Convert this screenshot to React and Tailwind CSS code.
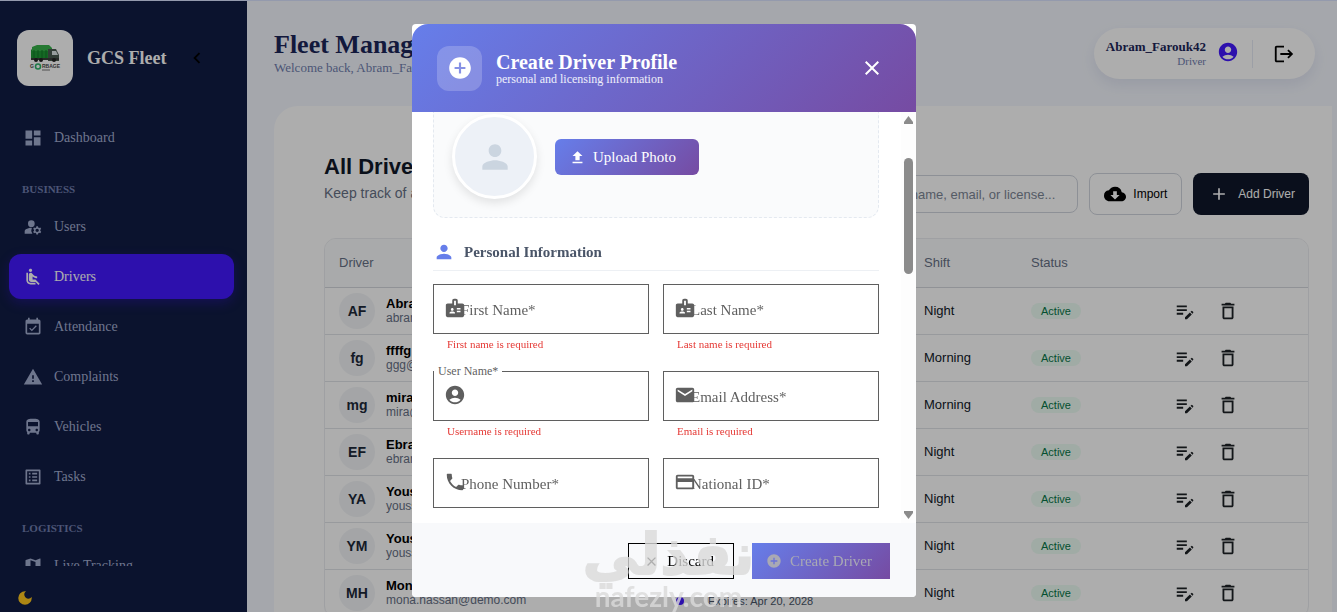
import {
  MdAccountCircle,
  MdAdd,
  MdAddCircle,
  MdAirlineSeatReclineNormal,
  MdBadge,
  MdChevronLeft,
  MdClose,
  MdCloudDownload,
  MdCreditCard,
  MdDarkMode,
  MdDashboard,
  MdDeleteOutline,
  MdDirectionsBus,
  MdEditNote,
  MdEmail,
  MdEventAvailable,
  MdListAlt,
  MdLogout,
  MdManageAccounts,
  MdMap,
  MdPerson,
  MdPhone,
  MdUpload,
  MdWarning,
} from "react-icons/md";

const drivers = [
  { initials: "AF", name: "Abram Farouk", email: "abram@demo.com", shift: "Night" },
  { initials: "fg", name: "ffffg", email: "ggg@demo.com", shift: "Morning" },
  { initials: "mg", name: "mira", email: "mira@demo.com", shift: "Morning" },
  { initials: "EF", name: "Ebram", email: "ebram@demo.com", shift: "Night" },
  { initials: "YA", name: "Youssef", email: "youssef@demo.com", shift: "Night" },
  { initials: "YM", name: "Youssef", email: "youssef@demo.com", shift: "Night" },
  {
    initials: "MH",
    name: "Mona Hassan",
    email: "mona.hassan@demo.com",
    shift: "Night",
    expires: "Apr 20, 2028",
  },
];

const fields = [
  { id: "firstName", label: "First Name", icon: MdBadge, error: "First name is required" },
  { id: "lastName", label: "Last Name", icon: MdBadge, error: "Last name is required" },
  {
    id: "userName",
    label: "User Name",
    icon: MdAccountCircle,
    error: "Username is required",
    floating: true,
  },
  { id: "email", label: "Email Address", icon: MdEmail, error: "Email is required" },
  { id: "phone", label: "Phone Number", icon: MdPhone },
  { id: "nationalId", label: "National ID", icon: MdCreditCard },
];

const Logo = () => (
  <svg viewBox="0 0 56 56" className="h-14 w-14" aria-label="Garbage company logo">
    <path d="M14 20l3-3h15l3 3v9H14z" fill="#1f9a35" />
    <path d="M15 17l5-2h12l3 3v3H15z" fill="#37b34a" />
    <path d="M17 20v8M21 20v8M25 20v8M29 20v8" stroke="#157a28" strokeWidth="1" />
    <path d="M31 19h8l3 6v6H31z" fill="#4b5a50" />
    <path d="M35 21h4l2 4h-6z" fill="#dfe8e8" />
    <path d="M14 28h28v2H14z" fill="#3a3f3a" />
    <circle cx="19" cy="30" r="2" fill="#222" />
    <circle cx="24" cy="30" r="2" fill="#222" />
    <circle cx="37" cy="30" r="2" fill="#222" />
    <circle cx="21" cy="36.500" r="2.500" fill="none" stroke="#2db36a" strokeWidth="1.500" />
    <text x="13" y="38" fontSize="5" fontWeight="700" fontFamily="Liberation Sans, sans-serif" fill="#4b4b4b">
      G
    </text>
    <text x="25" y="38" fontSize="5" fontWeight="700" fontFamily="Liberation Sans, sans-serif" fill="#4b4b4b">
      RBAGE
    </text>
    <path d="M25 40h8" stroke="#777" strokeWidth="1" />
  </svg>
);

const NavItem = ({ icon: Icon, label, active }) => (
  <a
    href="#"
    className={
      active
        ? "flex h-[45px] shrink-0 items-center gap-[11px] rounded-xl bg-[#4318ff] px-[14px] text-white shadow-[0_4px_12px_rgba(67,24,255,0.3)]"
        : "flex h-[45px] shrink-0 items-center gap-[11px] rounded-xl px-[14px] text-[#a3aed0]"
    }
  >
    <Icon size={20} />
    <span className="text-sm">{label}</span>
  </a>
);

const NavSection = ({ children }) => (
  <h2 className="-mt-[5px] flex h-[39px] shrink-0 items-end px-[13px] pb-1 text-[11px] leading-3 font-bold text-[#707eae]">
    {children}
  </h2>
);

const Sidebar = () => (
  <aside className="flex w-[247px] shrink-0 flex-col bg-[#111c44]">
    <div className="flex items-center px-[17px] pt-[29px]">
      <div className="rounded-xl bg-white">
        <Logo />
      </div>
      <span className="ml-[14px] text-lg font-bold text-white">GCS Fleet</span>
      <button type="button" aria-label="Collapse sidebar" className="ml-5 text-black">
        <MdChevronLeft size={22} />
      </button>
    </div>
    <nav className="mt-[29px] flex min-h-0 flex-1 flex-col gap-[5px] overflow-hidden pr-[13px] pl-[9px]">
      <NavItem icon={MdDashboard} label="Dashboard" />
      <NavSection>BUSINESS</NavSection>
      <NavItem icon={MdManageAccounts} label="Users" />
      <NavItem icon={MdAirlineSeatReclineNormal} label="Drivers" active />
      <NavItem icon={MdEventAvailable} label="Attendance" />
      <NavItem icon={MdWarning} label="Complaints" />
      <NavItem icon={MdDirectionsBus} label="Vehicles" />
      <NavItem icon={MdListAlt} label="Tasks" />
      <NavSection>LOGISTICS</NavSection>
      <NavItem icon={MdMap} label="Live Tracking" />
    </nav>
    <div className="flex h-[46px] shrink-0 items-end px-4 pb-[5px]">
      <button type="button" aria-label="Toggle dark mode" className="text-[#ffc81e]">
        <MdDarkMode size={18} />
      </button>
    </div>
  </aside>
);

const TopBar = () => (
  <header className="flex items-start justify-between pt-[27px] pr-[17px]">
    <div>
      <h1 className="pt-[2px] text-[26px] leading-[30px] font-bold text-[#1b2559]">
        Fleet Management
      </h1>
      <p className="text-[13px] leading-4 text-[#707eae]">Welcome back, Abram_Farouk42</p>
    </div>
    <div className="flex h-[51px] items-center rounded-full bg-white pr-5 pl-3 shadow-[0_6px_14px_rgba(112,126,174,0.15)]">
      <div className="pb-[2px] text-right">
        <p className="text-[13px] leading-4 font-bold text-[#1b2559]">Abram_Farouk42</p>
        <p className="text-[11px] leading-3 text-[#707eae]">Driver</p>
      </div>
      <MdAccountCircle size={22} className="mr-[13px] mb-1 ml-[11px] text-[#4318ff]" />
      <div className="h-7 border-l border-[#e6eaf5]" />
      <button type="button" aria-label="Log out" className="ml-5 text-black">
        <MdLogout size={22} />
      </button>
    </div>
  </header>
);

const DriversTable = () => (
  <div className="mt-[23px] overflow-hidden rounded-xl border border-[#eaecf0]">
    <table className="w-full table-fixed text-left text-[13px]">
      <thead className="bg-[#fafbfc] text-[#667085]">
        <tr className="h-12 border-b border-[#d5d8dd]">
          <th className="pl-[14px] font-normal">Driver</th>
          <th className="w-[245px]" />
          <th className="w-[107px] pl-[14px] font-normal">Shift</th>
          <th className="w-[145px] pl-[14px] font-normal">Status</th>
          <th className="w-[146px]" />
        </tr>
      </thead>
      <tbody>
        {drivers.map((driver) => (
          <tr key={driver.initials} className="h-[47px] border-b border-[#e1e4e8]">
            <td className="pl-[14px]">
              <div className="flex items-center gap-[11px]">
                <div className="flex h-9 w-9 items-center justify-center rounded-full bg-[#f2f4f7] text-sm font-bold text-[#1d2939]">
                  {driver.initials}
                </div>
                <div>
                  <p className="text-[13px] leading-[15px] font-bold text-black">{driver.name}</p>
                  <p className="text-xs leading-[14px] text-[#667085]">{driver.email}</p>
                </div>
              </div>
            </td>
            <td className="pl-[11px]">
              {driver.expires && (
                <div className="flex items-center gap-6 pt-4">
                  <span className="h-2 w-2 rounded-full bg-[#4318ff]" />
                  <span className="text-[11px] leading-[14px] text-[#475467]">
                    Expires: {driver.expires}
                  </span>
                </div>
              )}
            </td>
            <td className="pl-[14px] text-[#101828]">{driver.shift}</td>
            <td className="pl-[14px]">
              <span className="rounded-full bg-[#ecfdf3] px-[10px] py-[2px] text-[11px] text-[#067647]">
                Active
              </span>
            </td>
            <td>
              <div className="flex items-center gap-[21px] pl-3">
                <button type="button" aria-label="Edit driver" className="text-[#1d2125]">
                  <MdEditNote size={22} />
                </button>
                <button type="button" aria-label="Delete driver" className="text-[#1d2125]">
                  <MdDeleteOutline size={22} />
                </button>
              </div>
            </td>
          </tr>
        ))}
      </tbody>
    </table>
  </div>
);

const DriversCard = () => (
  <section className="mt-[27px] flex-1 rounded-tl-3xl bg-white pt-[49px] pr-[23px] pl-[50px] font-['Liberation_Sans',Arial,sans-serif]">
    <div className="flex items-start justify-between">
      <div>
        <h2 className="text-[22px] leading-6 font-bold text-[#101828]">All Drivers</h2>
        <p className="mt-1 text-sm text-[#667085]">Keep track of all drivers</p>
      </div>
      <div className="flex items-center gap-[11px] pt-[18px]">
        <input
          type="text"
          aria-label="Search drivers"
          placeholder="Search by name, email, or license..."
          className="h-[38px] w-[280px] rounded-lg border border-[#d0d5dd] px-[22px] text-right text-[13px] placeholder:text-[#7d8696]"
        />
        <button
          type="button"
          className="flex h-[42px] items-center gap-[7px] rounded-lg border border-[#d0d5dd] px-[14px] text-xs text-black"
        >
          <MdCloudDownload size={22} />
          Import
        </button>
        <button
          type="button"
          className="flex h-[42px] items-center gap-[9px] rounded-lg bg-[#0f172a] pr-[14px] pl-4 text-xs text-white"
        >
          <MdAdd size={20} />
          Add Driver
        </button>
      </div>
    </div>
    <DriversTable />
  </section>
);

const Field = ({ id, label, icon: Icon, error, floating }) => (
  <div className="h-[87px]">
    <div className="relative h-[50px]">
      <Icon size={22} className="absolute top-[13px] left-[11px] text-[#5f5f5f]" />
      <input
        id={id}
        type="text"
        className="h-full w-full border border-[#5f5f5f] bg-transparent px-7"
      />
      <label
        htmlFor={id}
        className={
          floating
            ? "absolute -top-2 left-px bg-white px-1 text-xs leading-4 text-[#5f5f5f]"
            : "absolute top-4 left-7 text-[15px] leading-5 text-[#5f5f5f]"
        }
      >
        {label}*
      </label>
    </div>
    {error && <p className="pt-1 pl-[14px] text-[11px] leading-3 text-[#e53935]">{error}</p>}
  </div>
);

const ScrollBar = () => (
  <div className="flex w-[15px] shrink-0 flex-col items-center bg-[#fdfdfd] py-1 text-[#8b8b8b]">
    <svg viewBox="0 0 9 8" className="h-2 w-[9px] fill-current">
      <path d="M4.500 0L9 6v2H0V6z" />
    </svg>
    <div className="mt-[34px] h-[116px] w-[9px] rounded-full bg-[#8b8b8b]" />
    <svg viewBox="0 0 9 8" className="mt-auto h-2 w-[9px] fill-current">
      <path d="M4.500 8L9 2V0H0v2z" />
    </svg>
  </div>
);

const CreateDriverDialog = () => (
  <div
    role="dialog"
    aria-label="Create Driver Profile"
    className="flex w-full max-w-[504px] flex-col overflow-hidden rounded bg-white"
  >
    <div className="flex h-[88px] shrink-0 items-center rounded-t-2xl bg-[linear-gradient(135deg,#667eea_0%,#764ba2_100%)] px-[25px] text-white">
      <div className="flex h-[45px] w-[45px] items-center justify-center rounded-xl bg-white/20">
        <MdAddCircle size={26} />
      </div>
      <div className="ml-[14px] flex-1 pt-px">
        <h2 className="text-xl leading-5 font-bold">Create Driver Profile</h2>
        <p className="text-xs leading-[14px] text-white/90">personal and licensing information</p>
      </div>
      <button type="button" aria-label="Close" className="mr-[7px]">
        <MdClose size={24} />
      </button>
    </div>

    <div className="flex min-h-0 flex-1 overflow-hidden">
      <div className="flex-1 pr-[22px] pl-[21px]">
        <div className="flex h-[106px] items-start gap-[18px] rounded-b-xl border border-t-0 border-dashed border-[#e4e9f0] bg-[#fafbfc] px-[18px] pt-[2px]">
          <div className="flex h-[85px] w-[85px] items-center justify-center rounded-full border-3 border-white bg-[#edf1f7] text-[#cbd5e0] shadow-[0_4px_10px_rgba(0,0,0,0.1)]">
            <MdPerson size={38} />
          </div>
          <button
            type="button"
            className="mt-[25px] flex h-9 items-center gap-[7px] rounded-md bg-[linear-gradient(135deg,#667eea_0%,#764ba2_100%)] pr-[23px] pl-[14px] text-[15px] text-white"
          >
            <MdUpload size={17} />
            Upload Photo
          </button>
        </div>

        <h3 className="mt-4 mb-[13px] flex h-[37px] items-center gap-[9px] border-b border-[#edf0f4] text-[15px] font-bold text-[#4a5568]">
          <MdPerson size={22} className="text-[#667eea]" />
          Personal Information
        </h3>

        <div className="grid grid-cols-2 gap-x-[14px]">
          {fields.map((field) => (
            <Field key={field.id} {...field} />
          ))}
        </div>
      </div>
      <ScrollBar />
    </div>

    <div className="flex h-[74px] shrink-0 items-center justify-end gap-[18px] bg-[#f8f9fb] px-[26px] pt-[2px]">
      <button
        type="button"
        className="flex h-9 items-center gap-2 border border-black pr-[19px] pl-[15px] text-[15px] text-black"
      >
        <MdClose size={15} />
        Discard
      </button>
      <button
        type="button"
        className="flex h-9 items-center gap-2 bg-[linear-gradient(135deg,#667eea_0%,#764ba2_100%)] pr-[18px] pl-[14px] text-[15px] text-[#a9a9b4]"
      >
        <MdAddCircle size={16} />
        Create Driver
      </button>
    </div>
  </div>
);

const App = () => (
  <div className="flex h-screen overflow-hidden border-t border-[#dbe4ff] bg-[#f4f7fe] font-['Liberation_Serif','Times_New_Roman',serif]">
    <Sidebar />
    <main className="flex min-w-0 flex-1 flex-col pr-[5px] pl-[27px]">
      <TopBar />
      <DriversCard />
    </main>

    <div className="fixed inset-0 flex justify-center bg-black/32 pt-6 pr-[9px] pb-[15px]">
      <CreateDriverDialog />
    </div>

    {/* Watermark */}
    <div className="pointer-events-none fixed inset-x-0 bottom-0 flex flex-col items-center text-[#dadada] opacity-80">
      <span
        lang="ar"
        className="text-[56px] leading-[50px] font-bold [-webkit-text-stroke:2px_#dadada] font-['DejaVu_Sans',sans-serif]"
      >
        نفذلي
      </span>
      <span className="text-[28px] leading-[32px] font-bold font-['Lato',sans-serif]">
        nafezly.com
      </span>
    </div>
  </div>
);

export default App;
